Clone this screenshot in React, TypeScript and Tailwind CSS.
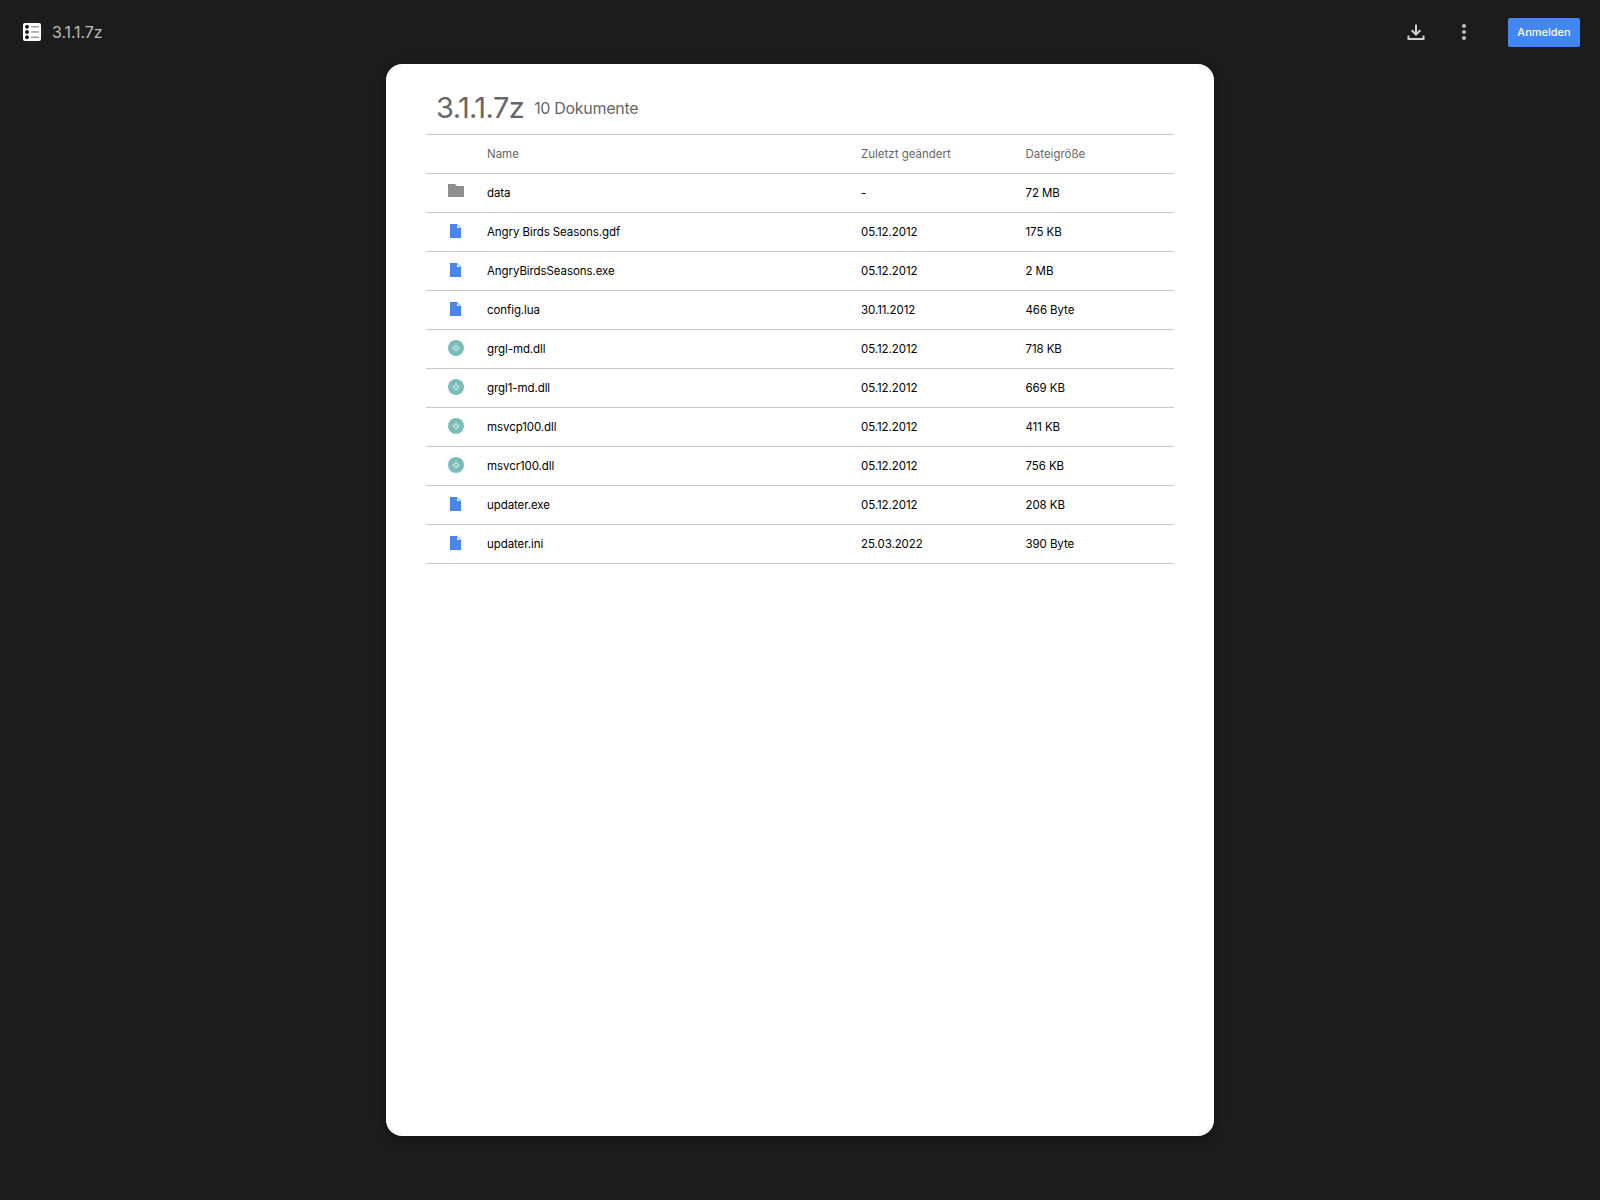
const rows = [
  { k: "folder", n: "data", d: "-", s: "72 MB" },
  { k: "file", n: "Angry Birds Seasons.gdf", d: "05.12.2012", s: "175 KB" },
  { k: "file", n: "AngryBirdsSeasons.exe", d: "05.12.2012", s: "2 MB" },
  { k: "file", n: "config.lua", d: "30.11.2012", s: "466 Byte" },
  { k: "dll", n: "grgl-md.dll", d: "05.12.2012", s: "718 KB" },
  { k: "dll", n: "grgl1-md.dll", d: "05.12.2012", s: "669 KB" },
  { k: "dll", n: "msvcp100.dll", d: "05.12.2012", s: "411 KB" },
  { k: "dll", n: "msvcr100.dll", d: "05.12.2012", s: "756 KB" },
  { k: "file", n: "updater.exe", d: "05.12.2012", s: "208 KB" },
  { k: "file", n: "updater.ini", d: "25.03.2022", s: "390 Byte" },
];

function RowIcon({ k }: { k: string }) {
  if (k === "folder")
    return (
      <svg width="16" height="13" viewBox="0 0 16 13" className="mt-[-8px]">
        <path d="M0 0h7l2 2h7v11H0z" fill="#8f8f8f" />
      </svg>
    );
  if (k === "file")
    return (
      <svg width="11" height="14" viewBox="0 0 11 14" className="mt-[-4px] mr-[1px]">
        <path d="M0 0h7l4 4v10H0z" fill="#4a86e8" />
        <path d="M7 1v3h3z" fill="#fff" />
      </svg>
    );
  return (
    <svg width="16" height="16" viewBox="0 0 16 16" className="mt-[-4px]">
      <circle cx="8" cy="8" r="8" fill="#7abdb8" />
      <g stroke="#d5e9e7" fill="none">
        <circle cx="8" cy="8" r="2" strokeWidth="1.2" />
        <path d="M8 5v-.8M8 11v.8M5 8h-.8M11 8h.8" strokeWidth="1" />
      </g>
    </svg>
  );
}

export default function App() {
  return (
    <div className="w-[1600px] h-[1200px] bg-[#1c1c1c] flex flex-col items-center overflow-hidden font-['Inter',sans-serif]">
      <header className="w-full h-[64px] shrink-0 flex items-center pl-[23px] pr-5">
        <svg width="18" height="18" viewBox="0 0 18 18">
          <rect width="18" height="18" rx="2" fill="#fff" />
          <circle cx="4" cy="3.7" r="2" fill="#1c1c1c" />
          <circle cx="4" cy="9" r="2" fill="#1c1c1c" />
          <circle cx="4" cy="14.3" r="2" fill="#1c1c1c" />
          <rect x="8" y="3" width="8" height="1.5" fill="#9e9e9e" />
          <rect x="8" y="8.2" width="8" height="1.5" fill="#9e9e9e" />
          <rect x="8" y="13.5" width="8" height="1.5" fill="#9e9e9e" />
        </svg>
        <span className="ml-[11px] text-[16px] text-[#bdbdbd] tracking-[-0.1px]">3.1.1.7z</span>
        <div className="ml-auto flex items-center">
          <svg width="18" height="18" viewBox="0 0 18 18" fill="none" stroke="#d0d0d0" strokeWidth="2">
            <path d="M9 1.5v9.5M4.7 7.2 9 11.5l4.3-4.3M1.5 12.5v3.5h15v-3.5" />
          </svg>
          <svg width="6" height="16" viewBox="0 0 6 16" className="ml-[36px]">
            <circle cx="3" cy="2" r="2" fill="#bdbdbd" />
            <circle cx="3" cy="8" r="2" fill="#bdbdbd" />
            <circle cx="3" cy="14" r="2" fill="#bdbdbd" />
          </svg>
          <button className="ml-[41px] w-[72px] h-[29px] rounded-[2px] bg-[#4285f4] text-white text-[11px] font-medium">
            Anmelden
          </button>
        </div>
      </header>
      <main className="w-[828px] h-[1072px] shrink-0 bg-white rounded-[16px] shadow-[0_2px_12px_rgba(0,0,0,0.35)] px-[40px]">
        <div className="h-[71px] flex items-end pl-[10px] pb-[8px] border-b border-[#c8c8c8]">
          <span className="text-[29px] leading-[36px] text-[#666666] tracking-[-0.6px]">3.1.1.7z</span>
          <span className="ml-[10px] text-[16px] leading-[36px] text-[#666666] tracking-[-0.3px]">10 Dokumente</span>
        </div>
        <div className="h-[39px] pt-[2px] flex items-center border-b border-[#c8c8c8] text-[11.5px] text-[#666666]">
          <span className="w-[61px] shrink-0" />
          <span className="w-[374px] shrink-0">Name</span>
          <span className="w-[164.5px] shrink-0">Zuletzt geändert</span>
          <span>Dateigröße</span>
        </div>
        {rows.map((r) => (
          <div key={r.n} className="h-[39px] pt-[2px] flex items-center border-b border-[#c8c8c8] text-[11.5px] text-black tracking-[-0.08px]">
            <span className="w-[61px] shrink-0 flex justify-center pr-[1px]">
              <RowIcon k={r.k} />
            </span>
            <span className="w-[374px] shrink-0">{r.n}</span>
            <span className="w-[164.5px] shrink-0">{r.d}</span>
            <span>{r.s}</span>
          </div>
        ))}
      </main>
    </div>
  );
}
